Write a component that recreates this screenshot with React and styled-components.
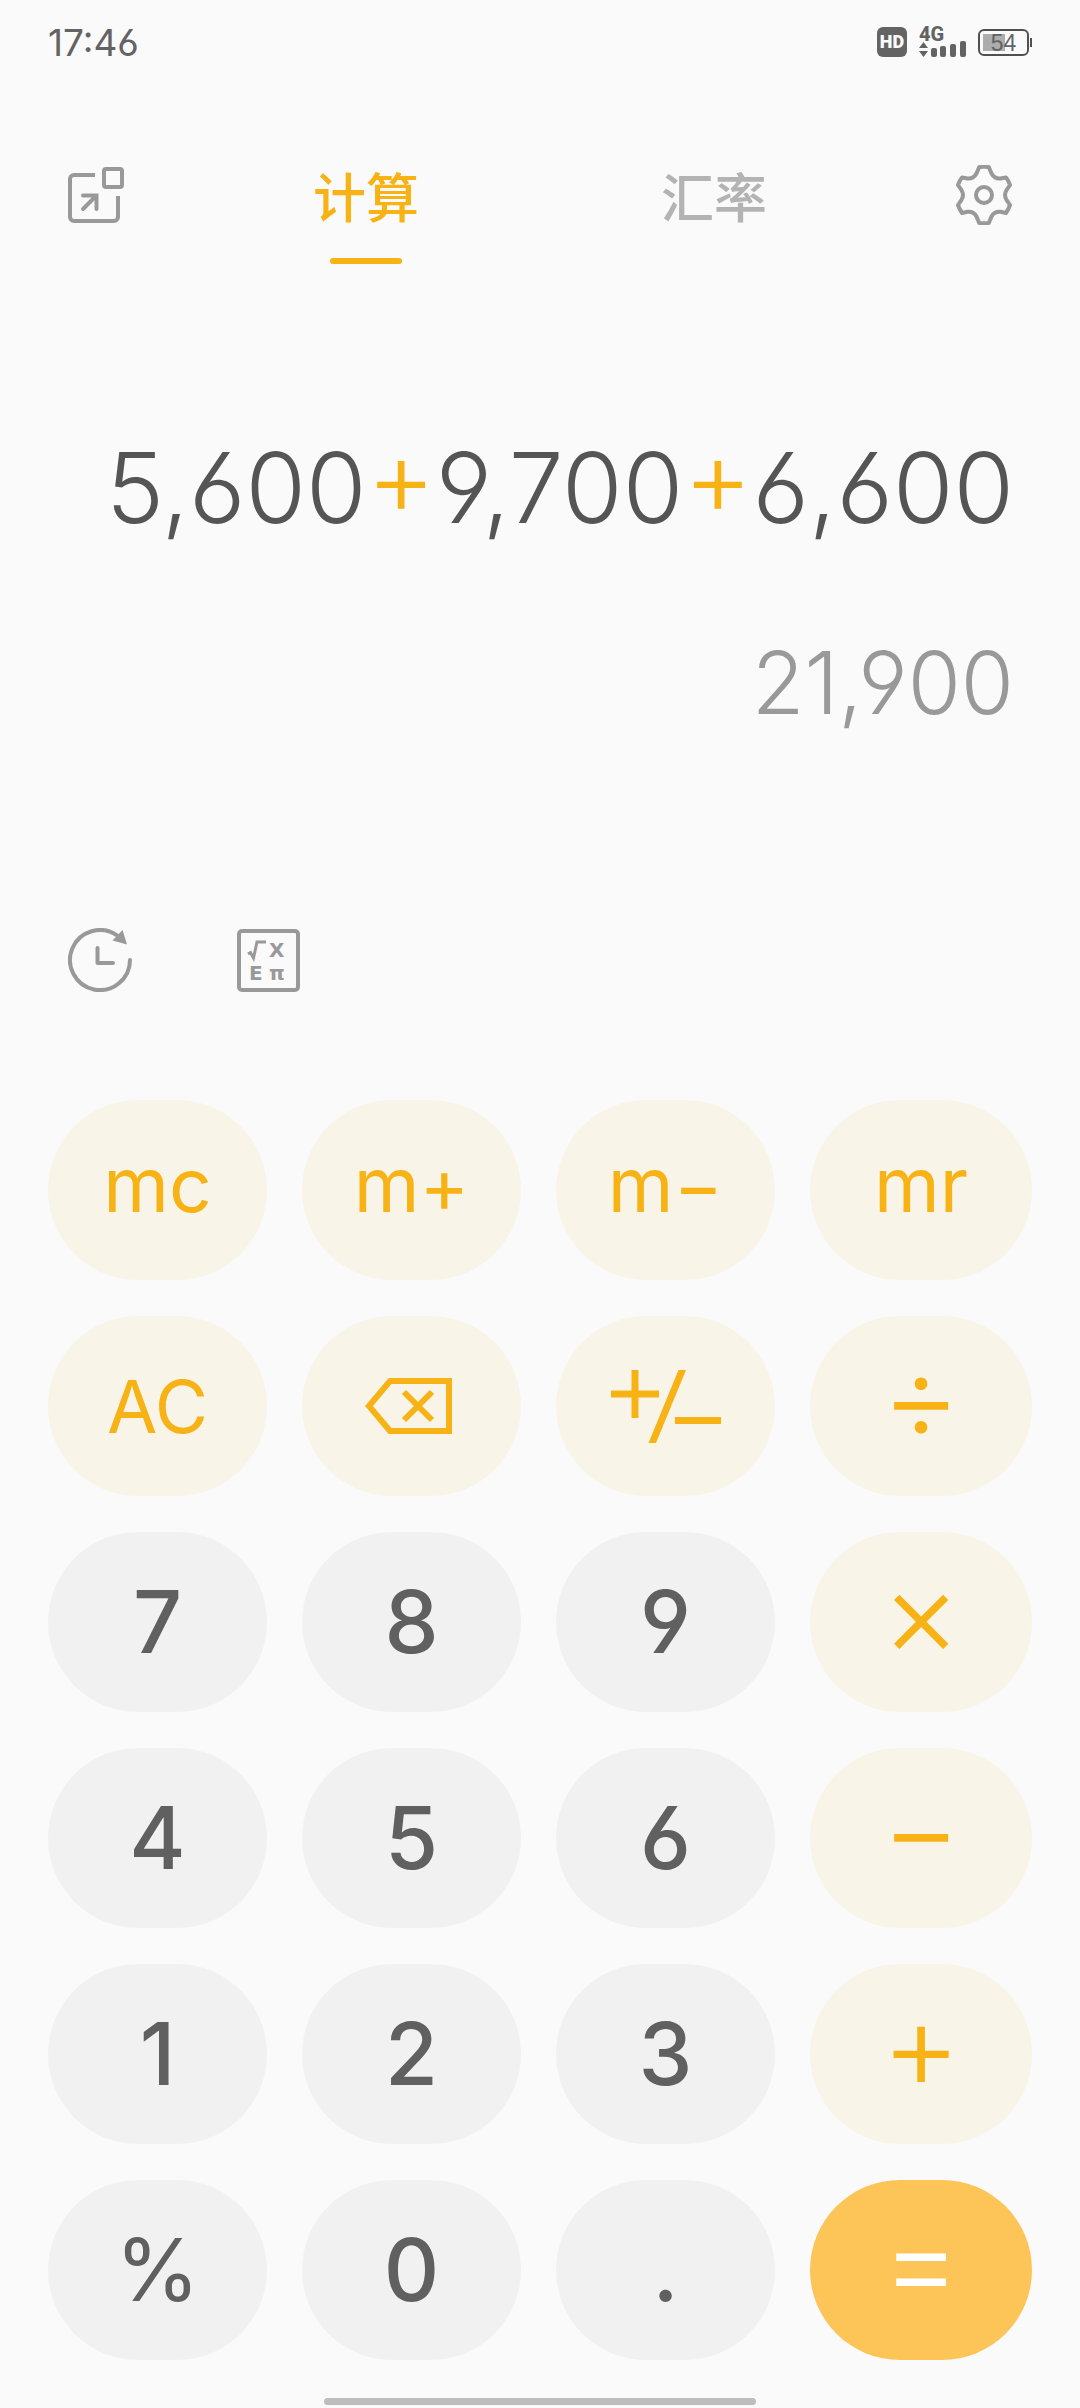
import { useState } from 'react'
import styled, { createGlobalStyle } from 'styled-components'

const colors = {
  page: '#fafafa',
  accent: '#f7b316',
  accentSoft: '#f9f4e8',
  accentSolid: '#fdc457',
  key: '#f1f1f1',
  digit: '#606060',
  text: '#555555',
  muted: '#999999',
  inactive: '#b3b3b3',
  status: '#636363',
}

const keys = [
  { label: 'mc', kind: 'memory' },
  { label: 'm+', kind: 'memory' },
  { label: 'm−', kind: 'memory' },
  { label: 'mr', kind: 'memory' },
  { label: 'AC', kind: 'action' },
  { label: 'backspace', kind: 'action', icon: BackspaceIcon },
  { label: 'plus minus', kind: 'action', icon: SignIcon },
  { label: '÷', kind: 'operator' },
  { label: '7', kind: 'digit' },
  { label: '8', kind: 'digit' },
  { label: '9', kind: 'digit' },
  { label: '×', kind: 'operator' },
  { label: '4', kind: 'digit' },
  { label: '5', kind: 'digit' },
  { label: '6', kind: 'digit' },
  { label: '−', kind: 'operator' },
  { label: '1', kind: 'digit' },
  { label: '2', kind: 'digit' },
  { label: '3', kind: 'digit' },
  { label: '+', kind: 'operator' },
  { label: '%', kind: 'percent' },
  { label: '0', kind: 'digit' },
  { label: '.', kind: 'digit' },
  { label: '=', kind: 'equals' },
]

const expression = ['5,600', '+', '9,700', '+', '6,600']

export default function App() {
  const [tab, setTab] = useState('计算')
  return (
    <>
      <GlobalStyle />
      <Screen>
        <StatusBar>
          <time>17:46</time>
          <StatusIcons>
            <HdBadge>HD</HdBadge>
            <Network>
              <NetworkType>4G</NetworkType>
              <SignalIcon />
            </Network>
            <Battery>
              <BatteryLevel />
              <BatteryText>54</BatteryText>
            </Battery>
          </StatusIcons>
        </StatusBar>

        <Header>
          <IconButton aria-label='small window'><WindowIcon /></IconButton>
          <Tabs>
            {['计算', '汇率'].map(name => (
              <Tab key={name} $active={tab === name} onClick={() => setTab(name)}>{name}</Tab>
            ))}
          </Tabs>
          <IconButton aria-label='settings'><GearIcon /></IconButton>
        </Header>

        <Display>
          <Expression>
            {expression.map((part, idx) => part === '+' ? <Operator key={idx}>+</Operator> : part)}
          </Expression>
          <Result>21,900</Result>
        </Display>

        <Tools>
          <IconButton aria-label='history'><HistoryIcon /></IconButton>
          <IconButton aria-label='scientific'><ScientificIcon /></IconButton>
        </Tools>

        <Keypad>
          {keys.map(({ label, kind, icon: Icon }) => (
            <Key key={label} $kind={kind} aria-label={label}>
              {Icon ? <Icon /> : label}
            </Key>
          ))}
        </Keypad>
        <HomeIndicator />
      </Screen>
    </>
  )
}

function WindowIcon() {
  return (
    <svg width='56' height='60' viewBox='0 0 56 60' fill='none' stroke='currentColor' strokeWidth='4'>
      <path d='M27 10H6a4 4 0 0 0-4 4v38a4 4 0 0 0 4 4h40a4 4 0 0 0 4-4V31' />
      <rect x='36' y='4' width='18' height='18' rx='2' />
      <path d='M15 30.500H28.500V44M28.500 30.500L15 44' strokeLinecap='round' />
    </svg>
  )
}

function GearIcon() {
  return (
    <svg width='56' height='60' viewBox='-28 -30 56 60' fill='none' stroke='currentColor' strokeWidth='4' strokeLinejoin='round'>
      <path d='M-4.800-28Q0-28.600 4.800-28L7.500-21.500Q10.500-16 16.500-16.500L22-17.500Q24.500-14.500 26-10L22.500-4.800Q19.500 0 22.500 4.800L26 10Q24.500 14.500 22 18L16.500 16.800Q10.500 16 7.500 21.500L4.800 28Q0 28.600-4.800 28L-7.500 21.500Q-10.500 16-16.500 16.800L-22 18Q-24.500 14.500-26 10L-22.500 4.800Q-19.500 0-22.500-4.800L-26-10Q-24.500-14.500-22-17.500L-16.500-16.500Q-10.500-16-7.500-21.500Z' />
      <circle r='8' />
    </svg>
  )
}

function HistoryIcon() {
  return (
    <svg width='64' height='64' viewBox='0 0 64 64' fill='none' stroke='currentColor' strokeWidth='4'>
      <path d='M62 32A30 30 0 1 1 49 7.300' strokeLinecap='round' />
      <path d='M54.500 2L59 16.500L44.500 12.500Z' fill='currentColor' stroke='none' />
      <path d='M29.500 20V35H45' strokeLinecap='round' strokeLinejoin='round' />
    </svg>
  )
}

function ScientificIcon() {
  return (
    <svg width='64' height='64' viewBox='0 0 64 64' fill='none' stroke='currentColor'>
      <rect x='3' y='3' width='59' height='59' rx='3' strokeWidth='4' />
      <path d='M12 26L14.500 24.500L17.500 30L21 14H30' strokeWidth='3' />
      <SymbolText x='33' y='29'>X</SymbolText>
      <SymbolText x='13' y='52'>E</SymbolText>
      <SymbolText x='33' y='52'>π</SymbolText>
    </svg>
  )
}

function BackspaceIcon() {
  return (
    <svg width='94' height='56' viewBox='0 0 94 56' fill='none' stroke='currentColor' strokeWidth='6'>
      <path d='M25 3H84V53H25L4 28Z' />
      <path d='M39 14L67 42M67 14L39 42' />
    </svg>
  )
}

function SignIcon() {
  return (
    <svg width='110' height='73' viewBox='0 0 110 73' fill='none' stroke='currentColor' strokeWidth='7'>
      <path d='M0 24H48M24 0V48M64 50.500H110' />
      <path d='M67.500 0H75L45 73H37.500Z' fill='currentColor' stroke='none' />
    </svg>
  )
}

function SignalIcon() {
  return (
    <svg width='47' height='16' viewBox='0 0 47 16' fill='currentColor'>
      <path d='M0 7L4.500 1L9 7ZM0 10H9L4.500 16Z' />
      <rect x='12' y='7' width='6' height='9' rx='2' />
      <rect x='21' y='5' width='6' height='11' rx='2' />
      <rect x='31' y='3' width='6' height='13' rx='2' />
      <rect x='41' y='0' width='6' height='16' rx='2' />
    </svg>
  )
}

const GlobalStyle = createGlobalStyle`
* {
  box-sizing: border-box;
}
body {
  margin: 0;
  background: ${colors.page};
  font-family: Inter, 'Noto Sans CJK SC', sans-serif;
  font-feature-settings: 'cv03', 'cv04';
}
button {
  border: none;
  padding: 0;
  background: none;
  font: inherit;
  font-feature-settings: inherit;
  cursor: pointer;
}
svg {
  display: block;
}
`

const Screen = styled.main`
display: flex;
flex-direction: column;
padding-bottom: 3px;
`

const StatusBar = styled.div`
display: flex;
align-items: center;
justify-content: space-between;
height: 84px;
padding: 0 48px;
color: ${colors.status};
font-size: 37px;
`

const StatusIcons = styled.div`
display: flex;
align-items: center;
gap: 12px;
`

const HdBadge = styled.span`
width: 30px;
height: 30px;
border-radius: 6px;
background: ${colors.status};
color: ${colors.page};
font: 900 18px/30px Roboto, sans-serif;
text-align: center;
`

const Network = styled.div`
display: flex;
flex-direction: column;
`

const NetworkType = styled.span`
font: 800 20px/14px Roboto, sans-serif;
`

const Battery = styled.div`
position: relative;
width: 51px;
height: 27px;
padding: 3px;
border: 2px solid #505050;
border-radius: 6px;
margin-right: 3px;
&::after {
  content: '';
  position: absolute;
  top: 7px;
  right: -5px;
  width: 2px;
  height: 9px;
  background: #505050;
}
`

const BatteryLevel = styled.div`
width: 54%;
height: 100%;
background: #adadad;
`

const BatteryText = styled.span`
position: absolute;
inset: 0;
color: ${colors.status};
font: 23px/25px 'Liberation Sans', sans-serif;
text-align: center;
`

const Header = styled.header`
display: flex;
align-items: flex-start;
gap: 68px;
padding: 81px 68px 0;
`

const IconButton = styled.button`
color: ${colors.muted};
`

const Tabs = styled.nav`
flex: 1;
display: grid;
grid-template-columns: 1fr 1fr;
`

const Tab = styled.button`
display: flex;
flex-direction: column;
align-items: center;
gap: 29px;
padding-top: 4px;
color: ${props => props.$active ? colors.accent : colors.inactive};
font-size: 53px;
font-weight: 500;
line-height: 60px;
&::after {
  content: '';
  width: 72px;
  height: 6px;
  border-radius: 3px;
  background: ${props => props.$active ? colors.accent : 'transparent'};
}
`

const Display = styled.section`
display: flex;
flex-direction: column;
align-items: flex-end;
gap: 85px;
padding: 164px 66px 0;
font-weight: 350;
`

const Expression = styled.output`
color: ${colors.text};
font-size: 98px;
line-height: 120px;
white-space: nowrap;
`

// 'case' lifts the math signs to the middle of the digits
const Operator = styled.span`
color: ${colors.accent};
font-size: 106px;
font-feature-settings: 'case';
line-height: 1;
`

const Result = styled.output`
color: ${colors.muted};
font-size: 86px;
line-height: 100px;
`

const Tools = styled.div`
display: flex;
gap: 104px;
padding: 195px 68px 0;
`

const SymbolText = styled.text`
fill: currentColor;
stroke: none;
font: 700 20px 'DejaVu Sans', sans-serif;
`

const Keypad = styled.section`
display: grid;
grid-template-columns: 73fr 73fr 73fr 74fr;
grid-auto-rows: 180px;
gap: 36px 35px;
padding: 108px 48px 38px;
`

const keyStyles = {
  memory: `padding-bottom: 12px; font-size: 75px;`,
  action: ``,
  operator: `font-size: 122px; font-weight: 300; font-feature-settings: 'case';`,
  digit: `font-size: 86px; font-weight: 500; color: ${colors.digit}; background: ${colors.key};`,
  percent: `font-size: 86px; color: ${colors.digit}; background: ${colors.key};`,
  equals: `font-size: 122px; font-weight: 300; font-feature-settings: 'case'; color: #ffffff; background: ${colors.accentSolid};`,
}

const Key = styled.button`
display: flex;
align-items: center;
justify-content: center;
border-radius: 90px;
background: ${colors.accentSoft};
color: ${colors.accent};
font-size: 73px;
line-height: 1;
${props => keyStyles[props.$kind]}
`

const HomeIndicator = styled.div`
align-self: center;
width: 40%;
height: 7px;
border-radius: 4px;
background: #bdbdbd;
`
